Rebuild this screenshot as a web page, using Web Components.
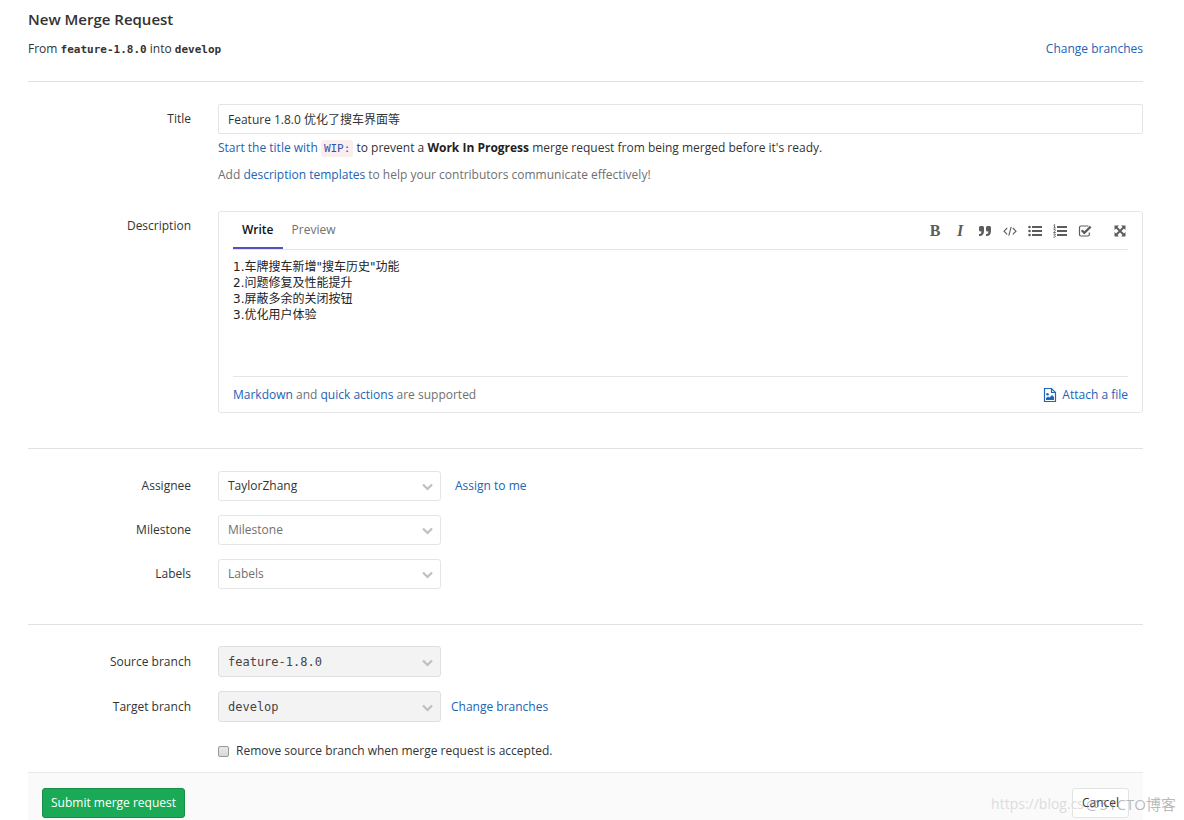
<!DOCTYPE html>
<html lang="en">
<head>
<meta charset="utf-8">
<title>New Merge Request</title>
<style>
body { margin: 0; background: #fff; color: #333; font: 12px/20px "Open Sans", "Noto Sans CJK SC", sans-serif; }
</style>
</head>
<body>
<merge-request-page></merge-request-page>
<script>
const base = `
  *, *::before, *::after { box-sizing: border-box; }
  a { color: #2263b5; text-decoration: none; }
  .label { text-align: right; color: #333; line-height: 30px; }
`;
function define(name, css, html) {
  customElements.define(name, class extends HTMLElement {
    constructor() {
      super();
      const root = this.attachShadow({ mode: "open" });
      root.innerHTML = `<style>${base}${css}</style>` + (typeof html === "function" ? html(this) : html);
    }
  });
}

define("page-heading", `
  :host { display: block; padding-bottom: 22px; border-bottom: 1px solid #e1e1e1; }
  h1 { margin: 0; font-size: 15px; line-height: 22px; font-weight: 600; color: #333; padding-top: 8px; }
  .line { display: flex; justify-content: space-between; margin-top: 9px; line-height: 20px; height: 20px; }
  code { font: bold 11px/16px "DejaVu Sans Mono", monospace; }
`, `
  <h1>New Merge Request</h1>
  <div class="line">
    <div>From <code>feature-1.8.0</code> into <code>develop</code></div>
    <a href="#branches">Change branches</a>
  </div>
`);

define("title-field", `
  :host { display: grid; grid-template-columns: 163px 1fr; column-gap: 27px; }
  input { display: block; width: 100%; height: 30px; padding: 0 9px; border: 1px solid #e5e5e5; border-radius: 2px; color: #333; background: #fff; font: inherit; }
  p { margin: 4px 0 0; }
  p + p { margin-top: 7px; color: #707070; }
  code { font: 11px/16px "DejaVu Sans Mono", monospace; padding: 2px 3px; border-radius: 3px; background: #fbeeee; color: #2f52b2; }
  b { color: #222; }
`, `
  <label class="label" for="title">Title</label>
  <div>
    <input id="title" type="text" value="Feature 1.8.0 优化了搜车界面等">
    <p><a href="#wip">Start the title with <code>WIP:</code></a> to prevent a <b>Work In Progress</b> merge request from being merged before it's ready.</p>
    <p>Add <a href="#templates">description templates</a> to help your contributors communicate effectively!</p>
  </div>
`);

define("editor-toolbar", `
  :host { display: flex; gap: 9px; }
  button { display: flex; align-items: center; justify-content: center; width: 16px; height: 18px; padding: 0; border: 0; background: none; color: #5c5c5c; font: bold 16px/18px "Liberation Serif", serif; }
  .italic { font-style: italic; }
  button:last-child { margin-left: 10px; }
  svg { display: block; width: 14px; height: 14px; fill: currentColor; }
`, `
  <button type="button" title="Bold">B</button>
  <button type="button" title="Italic" class="italic">I</button>
  <button type="button" aria-label="Quote"><svg viewBox="0 0 14 14"><path d="M2.500 2H4.500Q6 2 6 3.500V7Q6 12 1.500 12H1V10H1.500Q3.500 10 3.500 7.500H2.500Q1 7.500 1 6V3.500Q1 2 2.500 2ZM9.500 2H11.500Q13 2 13 3.500V7Q13 12 8.500 12H8V10H8.500Q10.500 10 10.500 7.500H9.500Q8 7.500 8 6V3.500Q8 2 9.500 2Z"/></svg></button>
  <button type="button" aria-label="Code"><svg viewBox="0 0 14 14"><path d="M4.200 4L1 7.200L4.200 10.400M9.800 4L13 7.200L9.800 10.400M8.200 2.800L5.800 11.600" fill="none" stroke="currentColor" stroke-width="1.100"/></svg></button>
  <button type="button" aria-label="Bullet list"><svg viewBox="0 0 14 14"><circle cx="1.500" cy="3" r="1.300"/><circle cx="1.500" cy="7" r="1.300"/><circle cx="1.500" cy="11" r="1.300"/><path d="M4 2H14V4H4ZM4 6H14V8H4ZM4 10H14V12H4Z"/></svg></button>
  <button type="button" aria-label="Numbered list"><svg viewBox="0 0 14 14"><path d="M4 2H14V4H4ZM4 6H14V8H4ZM4 10H14V12H4Z"/><path d="M.6 1.200L1.600 .6V4M.4 4H2.800M.5 5.800Q2.500 4.800 2.300 6.300Q2 7.300 .6 8.500H2.800M.5 10H2.400L1.400 11.300Q2.700 11.500 2.300 12.700Q1.600 13.600 .4 13" fill="none" stroke="currentColor" stroke-width=".9"/></svg></button>
  <button type="button" aria-label="Task list"><svg viewBox="0 0 14 14"><path d="M10.500 2H3Q1.500 2 1.500 3.500V10.500Q1.500 12 3 12H9.800Q11.300 12 11.300 10.500V8.500" fill="none" stroke="currentColor" stroke-width="1.200"/><path d="M3.700 6.300L6.300 8.900L12.700 2.600" fill="none" stroke="currentColor" stroke-width="2.200"/></svg></button>
  <button type="button" aria-label="Full screen"><svg viewBox="0 0 14 14"><path d="M1.500 1.500H6L1.500 6ZM12.500 1.500V6L8 1.500ZM1.500 12.500V8L6 12.500ZM12.500 12.500H8L12.500 8Z"/><path d="M3 3L11 11M11 3L3 11" stroke="currentColor" stroke-width="2"/></svg></button>
`);

define("description-editor", `
  :host { display: grid; grid-template-columns: 163px 1fr; column-gap: 27px; }
  .box { border: 1px solid #e5e5e5; border-radius: 3px; padding: 0 14px; }
  .bar { display: flex; justify-content: space-between; align-items: center; height: 38px; border-bottom: 1px solid #e5e5e5; }
  .tabs { display: flex; align-self: stretch; }
  .tabs button { margin: 0 0 -1px; padding: 0 9px; height: 37px; border: 0; border-bottom: 2px solid transparent; background: none; font: inherit; color: #707070; }
  .tabs .on { color: #111; font-weight: 600; border-bottom-color: #5252bd; }
  textarea { display: block; width: 100%; height: 126px; padding: 9px 0 0; border: 0; resize: none; outline: 0; background: none; color: #222; font: 12px/16px "DejaVu Sans", "Noto Sans CJK SC", sans-serif; }
  .foot { display: flex; justify-content: space-between; align-items: center; height: 36px; border-top: 1px solid #e5e5e5; color: #707070; }
  .attach { display: flex; align-items: center; gap: 5px; padding: 0; border: 0; background: none; color: #2263b5; font: inherit; }
`, `
  <label class="label" for="description">Description</label>
  <div class="box">
    <div class="bar">
      <div class="tabs"><button type="button" class="on">Write</button><button type="button">Preview</button></div>
      <editor-toolbar></editor-toolbar>
    </div>
    <textarea id="description">1.车牌搜车新增"搜车历史"功能
2.问题修复及性能提升
3.屏蔽多余的关闭按钮
3.优化用户体验</textarea>
    <div class="foot">
      <span><a href="#markdown">Markdown</a> and <a href="#actions">quick actions</a> are supported</span>
      <button type="button" class="attach">
        <svg width="14" height="16" viewBox="0 0 14 16"><path d="M1.500 1.500H8.500L12.500 5.500V14.500H1.500ZM8.500 1.500V5.500H12.500" fill="none" stroke="currentColor" stroke-width="1.200"/><path d="M3 13V11L5 9.500L6.500 10.500L9 8L11 10V13Z" fill="currentColor"/><circle cx="4.500" cy="7.300" r="1.300" fill="currentColor"/></svg>
        Attach a file
      </button>
    </div>
  </div>
`);

define("select-field", `
  :host { display: grid; grid-template-columns: 163px 223px 1fr; column-gap: 27px; align-items: center; }
  .wrap { display: grid; align-items: center; }
  select, svg { grid-area: 1 / 1; }
  select { appearance: none; width: 100%; height: 30px; margin: 0; padding: 0 9px; border: 1px solid #e5e5e5; border-radius: 3px; background: #fff; color: #333; font: inherit; opacity: 1; }
  select.empty { color: #707070; }
  select:disabled { height: 31px; background: #f3f3f3; border-color: #dfdfdf; color: #444; font: 12px/20px "DejaVu Sans Mono", monospace; }
  svg { justify-self: end; margin: 2px 8px 0 0; pointer-events: none; }
  .after { margin-left: -13px; }
  :host([branch]) .after { margin-left: -17px; }
`, el => {
  const state = el.hasAttribute("branch") ? "disabled" : el.hasAttribute("empty") ? 'class="empty"' : "";
  return `
  <label class="label" for="choice">${el.getAttribute("label")}</label>
  <div class="wrap">
    <select id="choice" ${state}><option>${el.getAttribute("value")}</option></select>
    <svg width="11" height="8" viewBox="0 0 11 8"><path d="M1 1.500L5.500 6L10 1.500" fill="none" stroke="#bfbfbf" stroke-width="2.200"/></svg>
  </div>
  <div class="after"><slot></slot></div>`;
});

define("field-group", `
  :host { display: flex; flex-direction: column; gap: 14px; padding: 22px 0 35px; border-bottom: 1px solid #e1e1e1; }
  :host([last]) { border: 0; padding: 21px 0 11px; }
  :host([lead]) { gap: 26px; }
`, `<slot></slot>`);

define("check-field", `
  :host { display: block; padding-left: 190px; }
  label { display: flex; align-items: center; gap: 7px; line-height: 20px; padding-top: 5px; }
  input { appearance: none; width: 11px; height: 11px; margin: 0; border: 1px solid #999; border-radius: 2px; background: linear-gradient(#e8e8e8, #d8d8d8); }
`, `<label><input type="checkbox"><span><slot></slot></span></label>`);

define("form-actions", `
  :host { display: flex; justify-content: space-between; padding: 15px 14px 2px; background: #fafafa; border-top: 1px solid #e9e9e9; }
  button { height: 30px; min-width: 57px; padding: 0 8px; border: 1px solid #e3e3e3; border-radius: 3px; background: #fff; color: #333; font: inherit; }
  .go { background: #1aaa55; border-color: #168f48; color: #fff; }
`, `<button type="submit" class="go">Submit merge request</button><button type="button">Cancel</button>`);

define("water-mark", `
  :host { position: absolute; right: 8px; bottom: 6px; display: flex; align-items: center; gap: 2px; pointer-events: none; font-size: 14px; line-height: 20px; white-space: nowrap; }
  .url { color: #dcdcdc; }
  .site { font-size: 15px; color: rgba(140, 140, 140, .6); }
`, `<span class="url">https://blog.cs</span><span class="site">@51CTO博客</span>`);

define("merge-request-page", `
  :host { display: block; position: relative; padding: 0 41px 0 28px; }
  form { margin: 0; }
`, `
  <form>
    <page-heading></page-heading>
    <field-group lead>
      <title-field></title-field>
      <description-editor></description-editor>
    </field-group>
    <field-group>
      <select-field label="Assignee" value="TaylorZhang"><a href="#me">Assign to me</a></select-field>
      <select-field label="Milestone" value="Milestone" empty></select-field>
      <select-field label="Labels" value="Labels" empty></select-field>
    </field-group>
    <field-group last>
      <select-field label="Source branch" value="feature-1.8.0" branch></select-field>
      <select-field label="Target branch" value="develop" branch><a href="#branches">Change branches</a></select-field>
      <check-field>Remove source branch when merge request is accepted.</check-field>
    </field-group>
    <form-actions></form-actions>
  </form>
  <water-mark></water-mark>
`);
</script>
</body>
</html>
